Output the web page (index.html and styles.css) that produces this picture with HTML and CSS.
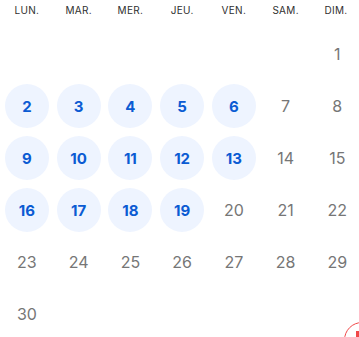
FILE: index.html
```html
<!DOCTYPE html>
<html lang="fr">
<head>
<meta charset="utf-8">
<link rel="stylesheet" href="styles.css">
</head>
<body>
<div class="cal">
  <div class="head">LUN.</div><div class="head">MAR.</div><div class="head">MER.</div><div class="head">JEU.</div><div class="head">VEN.</div><div class="head">SAM.</div><div class="head">DIM.</div>
  <div class="day"></div><div class="day"></div><div class="day"></div><div class="day"></div><div class="day"></div><div class="day"></div><div class="day"><span class="n">1</span></div>
  <div class="day"><span class="n on">2</span></div><div class="day"><span class="n on">3</span></div><div class="day"><span class="n on">4</span></div><div class="day"><span class="n on">5</span></div><div class="day"><span class="n on">6</span></div><div class="day"><span class="n">7</span></div><div class="day"><span class="n">8</span></div>
  <div class="day"><span class="n on">9</span></div><div class="day"><span class="n on">10</span></div><div class="day"><span class="n on">11</span></div><div class="day"><span class="n on">12</span></div><div class="day"><span class="n on">13</span></div><div class="day"><span class="n">14</span></div><div class="day"><span class="n">15</span></div>
  <div class="day"><span class="n on">16</span></div><div class="day"><span class="n on">17</span></div><div class="day"><span class="n on">18</span></div><div class="day"><span class="n on">19</span></div><div class="day"><span class="n">20</span></div><div class="day"><span class="n">21</span></div><div class="day"><span class="n">22</span></div>
  <div class="day"><span class="n">23</span></div><div class="day"><span class="n">24</span></div><div class="day"><span class="n">25</span></div><div class="day"><span class="n">26</span></div><div class="day"><span class="n">27</span></div><div class="day"><span class="n">28</span></div><div class="day"><span class="n">29</span></div>
  <div class="day"><span class="n">30</span></div>
</div>
<svg class="fab" width="15" height="15" viewBox="0 0 15 15">
  <circle cx="18" cy="18" r="17.5" fill="none" stroke="#f04848" stroke-width="1"/>
  <rect x="12" y="9" width="3" height="6" fill="#f04848"/>
</svg>
</body>
</html>
```
FILE: styles.css
```css
html, body {
  margin: 0;
  padding: 0;
  background: #fff;
  overflow: hidden;
}
body {
  width: 359px;
  height: 337px;
  position: relative;
  font-family: Inter, "Open Sans", Arial, sans-serif;
}
.cal {
  display: grid;
  grid-template-columns: repeat(6, 51.75px) 47.5px;
  grid-template-rows: 28px;
  grid-auto-rows: 52px;
  padding-left: 1px;
  height: 337px;
  overflow: hidden;
}
.head {
  align-self: start;
  height: 20px;
  line-height: 20px;
  font-size: 10px;
  letter-spacing: 0.3px;
  color: #2f2f2f;
  text-align: center;
}
.head:nth-child(7) {
  text-align: left;
  padding-left: 13px;
}
.day {
  display: flex;
  align-items: center;
  justify-content: center;
}
.day:nth-child(7n) {
  justify-content: flex-start;
  padding-left: 4px;
}
.n {
  width: 44px;
  height: 44px;
  border-radius: 50%;
  display: flex;
  align-items: center;
  justify-content: center;
  font-size: 16px;
  color: #767676;
}
.n.on {
  background: #eef4ff;
  color: #0b5bd3;
  font-weight: 700;
  font-size: 15px;
}
.fab {
  position: absolute;
  left: 344px;
  top: 322px;
  display: block;
}
```
